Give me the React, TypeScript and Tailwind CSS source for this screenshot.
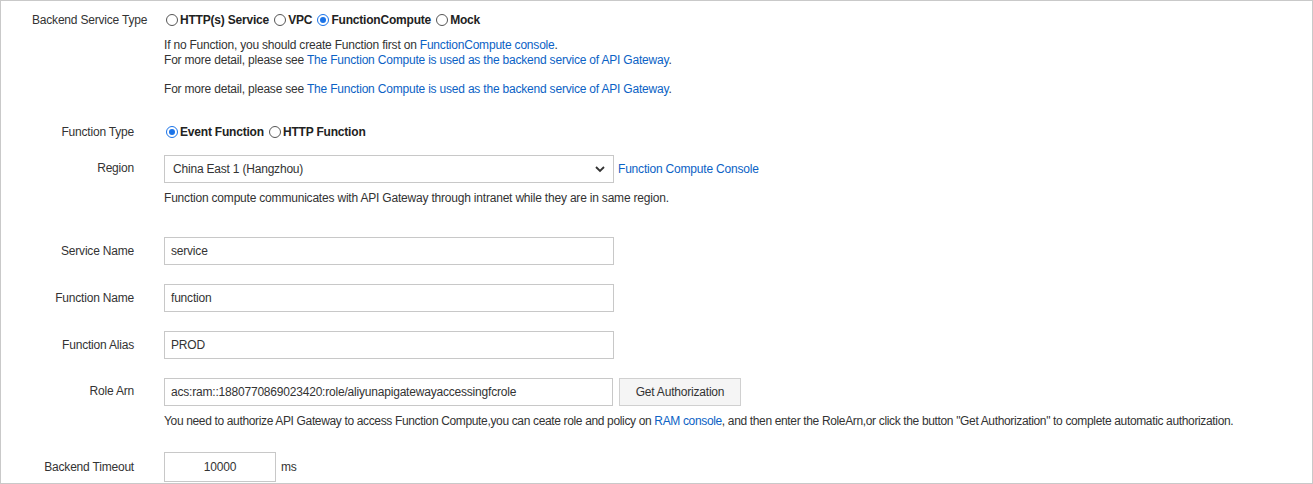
import React from "react";

const L = "w-[133px] shrink-0 text-right whitespace-nowrap text-[#333]";
const link = "text-[#0b62c5]";

function Radio({ checked }: { checked?: boolean }) {
  return (
    <span className={`inline-block w-[12px] h-[12px] rounded-full border ${checked ? "border-[#1a73e8]" : "border-[#555]"} bg-white relative align-[-2px] mx-[2px]`}>
      {checked && <span className="absolute left-[2px] top-[2px] w-[6px] h-[6px] rounded-full bg-[#1a73e8]" />}
    </span>
  );
}

function Input({ v, w = "w-[450px]", center }: { v: string; w?: string; center?: boolean }) {
  return (
    <div className={`${w} h-[28px] border border-[#c8c8c8] bg-white flex items-center px-[6px] ${center ? "justify-center" : ""}`}>{v}</div>
  );
}

export default function App() {
  return (
    <div className="w-[1313px] h-[484px] border border-[#c9c9c9] bg-white text-[12px] text-[#333] leading-[15px] font-[Liberation_Sans,Arial,sans-serif] tracking-[-0.2px] relative">
      <div className="flex pt-[12px]">
        <div className={L + " !text-left pl-[31px]"}>Backend Service Type</div>
        <div className="ml-[30px]">
          <div className="font-bold text-[#222]">
            <Radio />HTTP(s) Service <Radio />VPC <Radio checked />FunctionCompute <Radio />Mock
          </div>
          <div className="mt-[10px]">If no Function, you should create Function first on <span className={link}>FunctionCompute console</span>.</div>
          <div>For more detail, please see <span className={link}>The Function Compute is used as the backend service of API Gateway</span>.</div>
          <div className="mt-[14px]">For more detail, please see <span className={link}>The Function Compute is used as the backend service of API Gateway</span>.</div>
        </div>
      </div>
      <div className="flex mt-[28px]">
        <div className={L}>Function Type</div>
        <div className="ml-[30px] font-bold text-[#222]">
          <Radio checked />Event Function <Radio />HTTP Function
        </div>
      </div>
      <div className="flex mt-[15px]">
        <div className={L + " pt-[6px]"}>Region</div>
        <div className="ml-[30px]">
          <div className="flex items-center">
            <div className="w-[450px] h-[28px] border border-[#c8c8c8] bg-white flex items-center justify-between px-[8px]">
              <span>China East 1 (Hangzhou)</span>
              <svg width="10" height="7" viewBox="0 0 10 7"><path d="M1 1l4 4 4-4" stroke="#333" strokeWidth="1.8" fill="none" /></svg>
            </div>
            <span className={link + " ml-[4px]"}>Function Compute Console</span>
          </div>
          <div className="mt-[8px]">Function compute communicates with API Gateway through intranet while they are in same region.</div>
        </div>
      </div>
      {[["Service Name", "service", 31], ["Function Name", "function", 19], ["Function Alias", "PROD", 19]].map(([l, v, m]) => (
        <div key={l as string} className="flex items-center" style={{ marginTop: m as number }}>
          <div className={L}>{l}</div>
          <div className="ml-[30px]"><Input v={v as string} /></div>
        </div>
      ))}
      <div className="flex mt-[19px]">
        <div className={L + " pt-[6px]"}>Role Arn</div>
        <div className="ml-[30px]">
          <div className="flex items-center">
            <Input v="acs:ram::1880770869023420:role/aliyunapigatewayaccessingfcrole" w="w-[449px]" />
            <div className="ml-[6px] w-[122px] h-[28px] border border-[#d0d0d0] bg-[#f5f5f5] flex items-center justify-center">Get Authorization</div>
          </div>
          <div className="mt-[8px] whitespace-nowrap tracking-[-0.35px]">You need to authorize API Gateway to access Function Compute,you can ceate role and policy on <span className={link}>RAM console</span>, and then enter the RoleArn,or click the button "Get Authorization" to complete automatic authorization.</div>
        </div>
      </div>
      <div className="flex items-center mt-[23px]">
        <div className={L}>Backend Timeout</div>
        <div className="ml-[30px] flex items-center">
          <div className="w-[112px] h-[30px] border border-[#c8c8c8] flex items-center justify-center">10000</div>
          <span className="ml-[5px]">ms</span>
        </div>
      </div>
    </div>
  );
}
